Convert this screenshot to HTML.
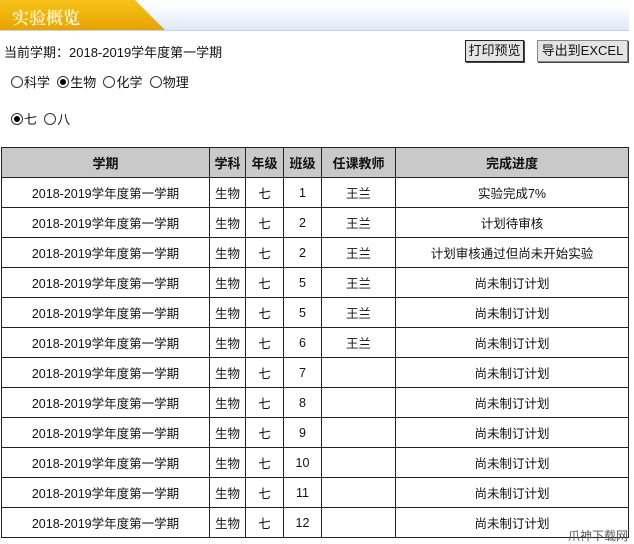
<!DOCTYPE html>
<html><head><meta charset="utf-8"><style>
body{margin:0;width:634px;height:544px;background:#fff;font-family:"Liberation Sans","Noto Sans CJK SC",sans-serif;font-size:13px;color:#111;position:relative;overflow:hidden}
.bar{position:absolute;left:0;top:0;width:629px;height:30px;background:linear-gradient(#fdfeff,#fbfdff 25%,#dde9f6);border-bottom:1px solid #c8d4e2}
.tab{position:absolute;left:0;top:0;width:165px;height:30px;background:linear-gradient(#f6c21a,#e9a300);clip-path:polygon(0 0,135px 0,165px 30px,0 30px)}
.tab span{position:absolute;left:12px;top:4px;color:#fff3c0;font-family:"Noto Serif CJK SC",serif;font-weight:bold;font-size:17px}
.t{position:absolute;white-space:nowrap}
.btn{position:absolute;height:20px;background:#e4e4e4;border:1px solid #888;box-shadow:1px 1px 0 #444;font-size:13px;line-height:20px;text-align:center}
.r{display:inline-block;width:10px;height:10px;border:1px solid #333;border-radius:50%;vertical-align:-1px;position:relative;margin-right:1px}
.r.on::after{content:"";position:absolute;left:2px;top:2px;width:6px;height:6px;border-radius:50%;background:#000}
table{position:absolute;left:1px;top:147px;border-collapse:collapse;width:628px}
td,th{border:1px solid #222;height:29px;padding:0;text-align:center;font-size:12.5px}
th{background:#c9c9c9;font-weight:bold;font-size:13px}
</style></head><body>
<div class="bar"></div><div class="tab"><span>实验概览</span></div>
<div class="t" style="left:4px;top:42px">当前学期：2018-2019学年度第一学期</div>
<div class="btn" style="left:465px;top:40px;width:57px;border-color:#222">打印预览</div>
<div class="btn" style="left:537px;top:40px;width:89px">导出到EXCEL</div>
<div class="t" style="left:11px;top:72px"><span class="r"></span>科学 &nbsp;<span class="r on"></span>生物 &nbsp;<span class="r"></span>化学 &nbsp;<span class="r"></span>物理</div>
<div class="t" style="left:11px;top:109px"><span class="r on"></span>七 &nbsp;<span class="r"></span>八</div>
<table>
<tr><th style="width:207px">学期</th><th style="width:35px">学科</th><th style="width:37px">年级</th><th style="width:37px">班级</th><th style="width:73px">任课教师</th><th>完成进度</th></tr>
<tr><td>2018-2019学年度第一学期</td><td>生物</td><td>七</td><td>1</td><td>王兰</td><td>实验完成7%</td></tr>
<tr><td>2018-2019学年度第一学期</td><td>生物</td><td>七</td><td>2</td><td>王兰</td><td>计划待审核</td></tr>
<tr><td>2018-2019学年度第一学期</td><td>生物</td><td>七</td><td>2</td><td>王兰</td><td>计划审核通过但尚未开始实验</td></tr>
<tr><td>2018-2019学年度第一学期</td><td>生物</td><td>七</td><td>5</td><td>王兰</td><td>尚未制订计划</td></tr>
<tr><td>2018-2019学年度第一学期</td><td>生物</td><td>七</td><td>5</td><td>王兰</td><td>尚未制订计划</td></tr>
<tr><td>2018-2019学年度第一学期</td><td>生物</td><td>七</td><td>6</td><td>王兰</td><td>尚未制订计划</td></tr>
<tr><td>2018-2019学年度第一学期</td><td>生物</td><td>七</td><td>7</td><td></td><td>尚未制订计划</td></tr>
<tr><td>2018-2019学年度第一学期</td><td>生物</td><td>七</td><td>8</td><td></td><td>尚未制订计划</td></tr>
<tr><td>2018-2019学年度第一学期</td><td>生物</td><td>七</td><td>9</td><td></td><td>尚未制订计划</td></tr>
<tr><td>2018-2019学年度第一学期</td><td>生物</td><td>七</td><td>10</td><td></td><td>尚未制订计划</td></tr>
<tr><td>2018-2019学年度第一学期</td><td>生物</td><td>七</td><td>11</td><td></td><td>尚未制订计划</td></tr>
<tr><td>2018-2019学年度第一学期</td><td>生物</td><td>七</td><td>12</td><td></td><td>尚未制订计划</td></tr>
</table>
<div class="t" style="left:568px;top:527px;font-size:12px;color:#555">爪神下载网</div>
</body></html>
